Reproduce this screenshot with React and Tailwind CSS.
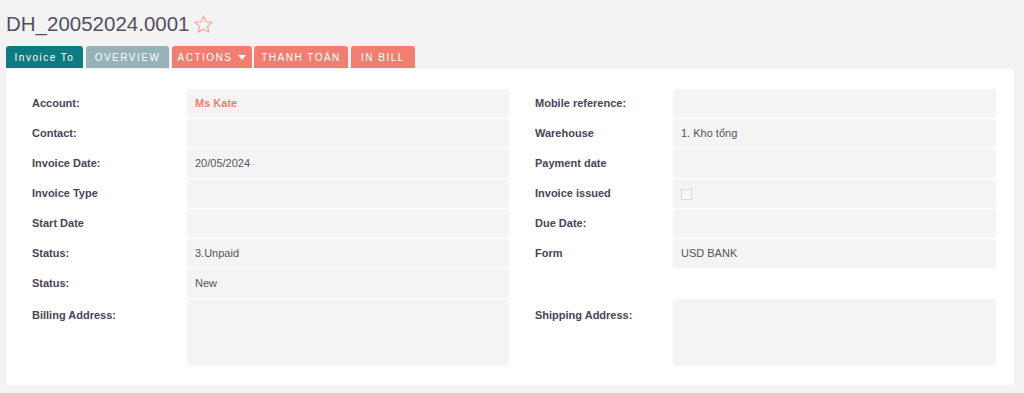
const leftRows = [
  { label: "Account:", value: "Ms Kate", accent: true },
  { label: "Contact:" },
  { label: "Invoice Date:", value: "20/05/2024" },
  { label: "Invoice Type" },
  { label: "Start Date" },
  { label: "Status:", value: "3.Unpaid" },
  { label: "Status:", value: "New" },
];

const rightRows = [
  { label: "Mobile reference:" },
  { label: "Warehouse", value: "1. Kho tổng" },
  { label: "Payment date" },
  { label: "Invoice issued", checkbox: true },
  { label: "Due Date:" },
  { label: "Form", value: "USD BANK" },
  { label: "", empty: true },
];

function Row({ row, labelW }) {
  return (
    <div className="flex h-[29px] items-center">
      <div className={`${labelW} shrink-0 text-[11px] font-bold text-[#4a4357]`}>{row.label}</div>
      {row.empty ? (
        <div className="flex-1" />
      ) : (
        <div className="flex h-full flex-1 items-center rounded-[3px] bg-[#f4f4f4] px-[8px] text-[11px]">
          {row.checkbox && <span className="mt-[1px] h-[11px] w-[11px] border border-[#d6d6dc] bg-[#f7f7f7]" />}
          {row.value && (
            <span className={row.accent ? "font-bold text-[#f07f70]" : "text-[#57525f]"}>{row.value}</span>
          )}
        </div>
      )}
    </div>
  );
}

function Column({ rows, areaLabel, labelW }) {
  return (
    <div className="flex flex-col gap-px">
      {rows.map((r, i) => (
        <Row key={i} row={r} labelW={labelW} />
      ))}
      <div className="flex h-[67px]">
        <div className={`${labelW} shrink-0 pt-[8px] text-[11px] font-bold text-[#4a4357]`}>{areaLabel}</div>
        <div className="flex-1 rounded-[3px] bg-[#f4f4f4]" />
      </div>
    </div>
  );
}

export default function App() {
  const tab = "flex h-[22px] items-center justify-center rounded-t-[3px] text-[10px] tracking-[1.5px] text-white";
  return (
    <div className="h-[393px] w-[1024px] bg-[#f3f3f3] font-['Liberation_Sans',Arial,sans-serif]">
      <div className="flex items-center gap-[3px] pl-[6px] pt-[11px]">
        <h1 className="text-[20.5px] leading-[26px] text-[#55505f]">DH_20052024.0001</h1>
        <svg width="21" height="21" viewBox="0 0 24 24" fill="none" stroke="#f3a59b" strokeWidth="1.3" strokeLinejoin="round">
          <path d="M12 2.5l2.9 6.3 6.9.7-5.2 4.6 1.5 6.8L12 17.4l-6.1 3.5 1.5-6.8-5.2-4.6 6.9-.7z" />
        </svg>
      </div>
      <div className="mt-[9px] flex pl-[6px]">
        <div className={`${tab} w-[77px] bg-[#0e7a82]`}>Invoice To</div>
        <div className={`${tab} ml-[3px] w-[83px] bg-[#94b2b7]`}>OVERVIEW</div>
        <div className={`${tab} ml-[3px] w-[80px] gap-[6px] bg-[#f07f72]`}>
          ACTIONS
          <svg width="8" height="5" viewBox="0 0 8 5" fill="#fff"><path d="M0 0h8L4 5z" /></svg>
        </div>
        <div className={`${tab} ml-[2px] w-[94px] bg-[#f07f72]`}>THANH TOÁN</div>
        <div className={`${tab} ml-[3px] w-[64px] bg-[#f07f72]`}>IN BILL</div>
      </div>
      <div className="mx-[6px] mt-px w-[1008px] bg-white pb-[19px] pl-[26px] pr-[18px] pt-[20px]">
        <div className="grid grid-cols-[477px_461px] gap-x-[26px]">
          <Column rows={leftRows} areaLabel="Billing Address:" labelW="w-[155px]" />
          <Column rows={rightRows} areaLabel="Shipping Address:" labelW="w-[138px]" />
        </div>
      </div>
    </div>
  );
}
